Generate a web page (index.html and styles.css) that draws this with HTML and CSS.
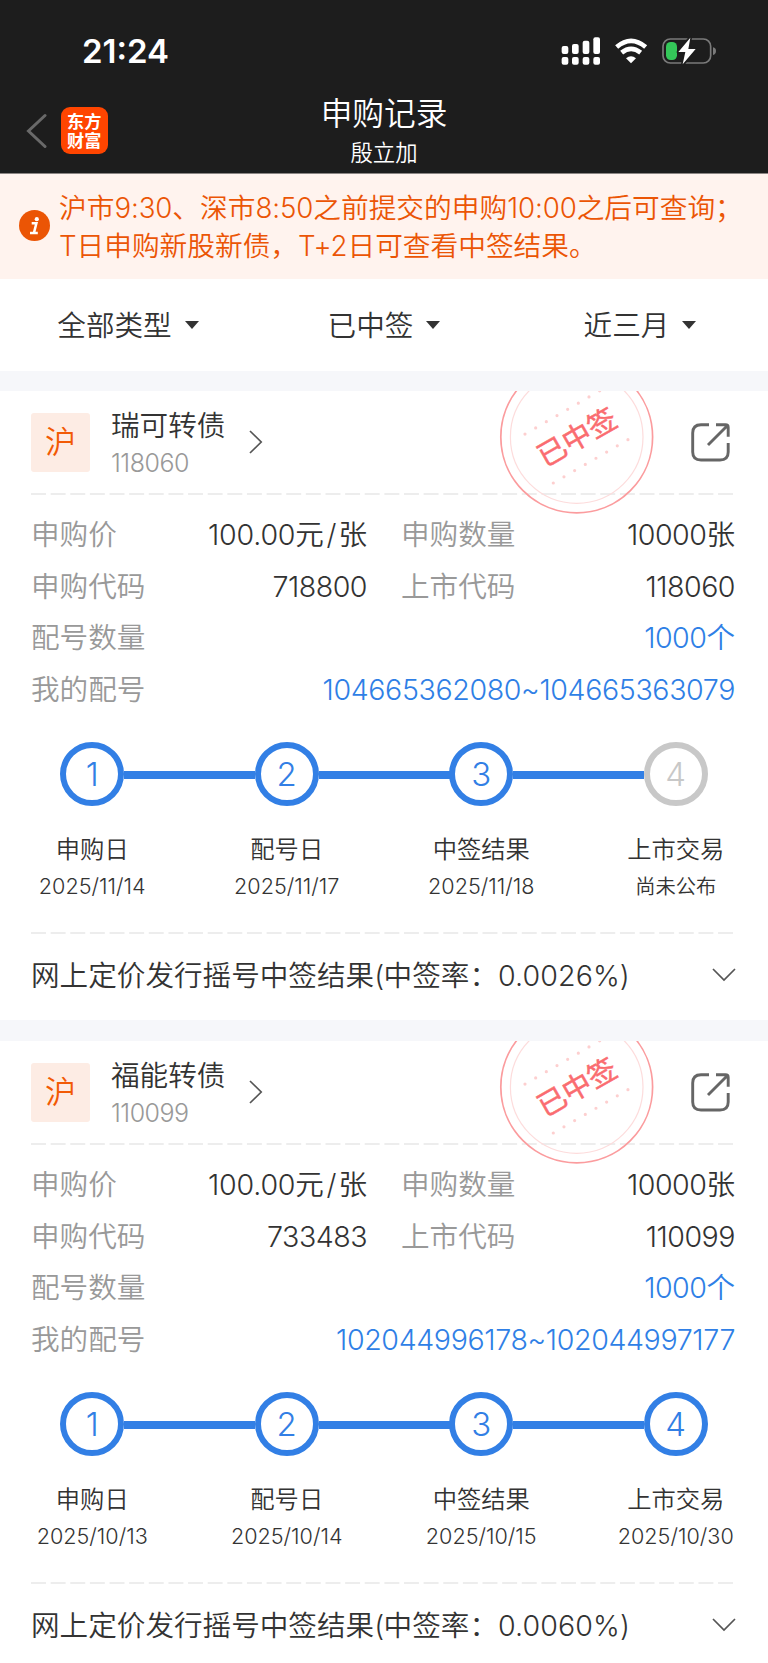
FILE: index.html
```html
<!DOCTYPE html>
<html lang="zh-CN">
<head>
<meta charset="utf-8">
<title>申购记录</title>
<link rel="stylesheet" href="styles.css">
</head>
<body>
<svg class="defs" width="0" height="0">
  <defs>
    <symbol id="stamp" viewBox="0 0 160 126">
      <g fill="none">
        <circle cx="79.7" cy="46" r="75.9" stroke="#fb9c9e" stroke-width="1.7"/>
        <circle cx="79.7" cy="46" r="66.3" stroke="#fddcdc" stroke-width="1.2"/>
        <g stroke="#fdcfcf" stroke-width="3.2" stroke-linecap="round" stroke-dasharray="0 12.33">
          <path d="M28 43.1L104 -1"/>
          <path d="M56.3 92L131.6 48.3"/>
        </g>
      </g>
      <text class="stamp-text" transform="translate(79.8 46) rotate(-29.7)" x="0" y="10.6" text-anchor="middle">已中签</text>
    </symbol>
    <symbol id="share" viewBox="0 0 39 39">
      <g fill="none" stroke="#666" stroke-width="2.9" stroke-linecap="butt" stroke-linejoin="round">
        <path d="M18 1.7H10Q1.7 1.7 1.7 10V29Q1.7 37 10 37H29Q37.2 37 37.2 29V20"/>
        <path d="M25 1.7H34.5Q37.2 1.7 37.2 4.4V13.8M36 3L17 22"/>
      </g>
    </symbol>
    <symbol id="right" viewBox="0 0 14 24"><path d="M1 1L12.2 12L1 23" fill="none" stroke="#555" stroke-width="1.7"/></symbol>
    <symbol id="down" viewBox="0 0 24 14"><path d="M1 1L12 12L23 1" fill="none" stroke="#555" stroke-width="1.7"/></symbol>
    <symbol id="dash" viewBox="0 0 702 2"><path d="M0 1H702" stroke="#e8e8e8" stroke-width="1.7" stroke-dasharray="15 4.63"/></symbol>
  </defs>
</svg>

<header class="top">
  <div class="status">
    <span class="time">21:24</span>
    <svg class="status-icons" viewBox="525 108 480 90">
      <g fill="#fff">
        <rect x="533" y="138" width="20" height="24" rx="6"/><rect x="564" y="132" width="20" height="30" rx="6"/>
        <rect x="596" y="122" width="20" height="40" rx="6"/><rect x="628" y="112" width="20" height="50" rx="6"/>
        <rect x="533" y="171" width="20" height="23" rx="6"/><rect x="564" y="171" width="20" height="23" rx="6"/>
        <rect x="596" y="171" width="20" height="23" rx="6"/><rect x="628" y="171" width="20" height="23" rx="6"/>
        <path d="M726 175Q741 162 756 175L741 190Z"/>
      </g>
      <g fill="none" stroke="#fff" stroke-width="14">
        <path d="M698 141Q741 104 785 141"/><path d="M713 158Q741 135 770 158"/>
      </g>
      <rect x="837" y="117" width="143" height="72" rx="22" fill="none" stroke="#7a7a7a" stroke-width="5"/>
      <path d="M987 142Q996 144 996 153T987 165Z" fill="#7a7a7a"/>
      <rect x="846" y="126" width="33" height="54" rx="14" fill="#34c759"/>
      <path d="M919 113L883 156H904L896 193L935 147H913Z" fill="#fff" stroke="#1d1d1d" stroke-width="10" paint-order="stroke" stroke-linejoin="round"/>
    </svg>
  </div>
  <div class="nav">
    <div class="nav-left">
      <svg class="back" viewBox="0 0 21 36"><path d="M19 2.5L2.5 18L19 33.5" fill="none" stroke="#696969" stroke-width="3" stroke-linecap="round"/></svg>
      <div class="logo">东方财富</div>
    </div>
    <div class="nav-title"><h1>申购记录</h1><p>殷立加</p></div>
  </div>
</header>

<section class="notice">
  <svg class="info" viewBox="0 0 31 31"><circle cx="15.5" cy="15.5" r="15.5" fill="#eb5505"/><g fill="none" stroke="#fff" stroke-width="2.5"><path d="M12.7 13.3H17.4L15 22.6M11 22.9H18.8"/></g><circle cx="17.8" cy="9.2" r="2.1" fill="#fff"/></svg>
  <p>沪市<b>9:30</b>、深市<b>8:50</b>之前提交的申购<b>10:00</b>之后可查询；<br><b>T</b>日申购新股新债，<b>T+2</b>日可查看中签结果。</p>
</section>

<nav class="filters">
  <div class="filter"><span>全部类型</span><i></i></div>
  <div class="filter"><span>已中签</span><i></i></div>
  <div class="filter"><span>近三月</span><i></i></div>
</nav>

<main>
  <article class="card">
    <svg class="stamp"><use href="#stamp"/></svg>
    <div class="card-head">
      <span class="market">沪</span>
      <div class="bond"><h2>瑞可转债</h2><p>118060</p></div>
      <svg class="go"><use href="#right"/></svg>
      <svg class="share"><use href="#share"/></svg>
    </div>
    <svg class="dash"><use href="#dash"/></svg>
    <dl class="facts">
      <dt>申购价</dt><dd><b class="price">100.00</b>元<b class="per">/</b>张</dd><dt class="second">申购数量</dt><dd><b>10000</b>张</dd>
      <dt>申购代码</dt><dd><b>718800</b></dd><dt class="second">上市代码</dt><dd><b>118060</b></dd>
      <dt>配号数量</dt><dd class="wide"><b>1000</b>个</dd>
      <dt>我的配号</dt><dd class="wide"><b class="range">104665362080~104665363079</b></dd>
    </dl>
    <ol class="steps">
      <li><span class="dot">1</span><strong>申购日</strong><em>2025/11/14</em></li>
      <li><span class="dot">2</span><strong>配号日</strong><em>2025/11/17</em></li>
      <li><span class="dot">3</span><strong>中签结果</strong><em>2025/11/18</em></li>
      <li class="todo"><span class="dot">4</span><strong>上市交易</strong><em class="cn">尚未公布</em></li>
    </ol>
    <svg class="dash"><use href="#dash"/></svg>
    <div class="result"><span>网上定价发行摇号中签结果<b>(</b>中签率：<b class="rate">0.0026%)</b></span><svg class="more"><use href="#down"/></svg></div>
  </article>

  <article class="card">
    <svg class="stamp"><use href="#stamp"/></svg>
    <div class="card-head">
      <span class="market">沪</span>
      <div class="bond"><h2>福能转债</h2><p>110099</p></div>
      <svg class="go"><use href="#right"/></svg>
      <svg class="share"><use href="#share"/></svg>
    </div>
    <svg class="dash"><use href="#dash"/></svg>
    <dl class="facts">
      <dt>申购价</dt><dd><b class="price">100.00</b>元<b class="per">/</b>张</dd><dt class="second">申购数量</dt><dd><b>10000</b>张</dd>
      <dt>申购代码</dt><dd><b>733483</b></dd><dt class="second">上市代码</dt><dd><b>110099</b></dd>
      <dt>配号数量</dt><dd class="wide"><b>1000</b>个</dd>
      <dt>我的配号</dt><dd class="wide"><b class="range">102044996178~102044997177</b></dd>
    </dl>
    <ol class="steps">
      <li><span class="dot">1</span><strong>申购日</strong><em>2025/10/13</em></li>
      <li><span class="dot">2</span><strong>配号日</strong><em>2025/10/14</em></li>
      <li><span class="dot">3</span><strong>中签结果</strong><em>2025/10/15</em></li>
      <li><span class="dot">4</span><strong>上市交易</strong><em>2025/10/30</em></li>
    </ol>
    <svg class="dash"><use href="#dash"/></svg>
    <div class="result"><span>网上定价发行摇号中签结果<b>(</b>中签率：<b class="rate">0.0060%)</b></span><svg class="more"><use href="#down"/></svg></div>
  </article>
</main>
</body>
</html>
```
FILE: styles.css
```css
* { box-sizing: border-box; margin: 0; padding: 0; }
html { height: 1663px; overflow: hidden; }
body {
  width: 768px; height: 1663px; overflow: hidden;
  background: #f6f7fa; color: #333;
  font-family: "Noto Sans CJK SC", sans-serif; font-weight: 350; font-size: 28.6px;
}
svg { display: block; flex: none; }
.defs { position: absolute; }
b { font-family: Inter, sans-serif; font-weight: 300; letter-spacing: -0.5px; line-height: 0; }
h1, h2 { font-weight: inherit; }
em { font-style: normal; }
li { list-style: none; }

.top { height: 174px; background: #1d1d1d; border-bottom: 1px solid #8b8583; color: #fff; }
.status { height: 86px; padding: 16px 49px 0 82px; display: flex; justify-content: space-between; align-items: center; }
.time { font: 600 33px/40px Inter, sans-serif; letter-spacing: 0; }
.status-icons { width: 160px; height: 30px; }
.nav { height: 87px; display: grid; grid-template-columns: 1fr 300px 1fr; }
.nav-left { display: flex; align-items: center; gap: 14px; padding: 2px 0 0 26px; }
.back { width: 21px; height: 36px; }
.logo {
  width: 47px; height: 47px; border-radius: 9px; background: #ff4500;
  padding: 4px 6px 0; font-weight: 700; font-size: 17.2px; line-height: 19.3px;
}
.nav-title { text-align: center; padding-top: 4px; }
.nav-title h1 { font-size: 31.7px; line-height: 42px; }
.nav-title p { font-size: 22.4px; line-height: 38px; }

.notice { height: 105px; background: #fff3ee; color: #eb5505; display: flex; padding: 14px 0 0 18.5px; gap: 9.5px; font-size: 27.7px; line-height: 37.7px; white-space: nowrap; }
.notice b { letter-spacing: -0.1px; }
.info { width: 31px; height: 31px; margin-top: 22px; }

.filters { height: 92px; background: #fff; display: grid; grid-template-columns: repeat(3, 256px); }
.filter { display: flex; align-items: center; justify-content: center; gap: 13px; }
.filter span { padding-bottom: 3px; }
.filter i { border: 7px solid transparent; border-top: 8px solid #333; border-bottom: 0; }

main { padding-top: 20px; display: grid; gap: 21px; }
.card { position: relative; height: 629px; background: #fff; padding: 0 33px 0 31px; overflow: hidden; }
.stamp { position: absolute; left: 497px; top: 0; width: 160px; height: 126px; z-index: 1; }
.stamp-text { font: 400 28.7px "Noto Sans CJK SC", sans-serif; fill: #fa6c70; stroke: #fa6c70; stroke-width: 0.5px; }
.card-head { height: 102px; display: flex; align-items: center; }
.market { width: 59px; height: 59px; border-radius: 3px; background: #fdece4; color: #f25a05; display: grid; place-items: center; font-size: 31px; line-height: 44px; padding-bottom: 4px; }
.bond { margin-left: 21px; width: 115px; white-space: nowrap; padding-top: 2px; }
.bond h2 { font-size: 28.6px; line-height: 38px; }
.bond p { font: 300 25px/37px Inter, sans-serif; letter-spacing: -0.5px; color: #999; padding-top: 2px; }
.go { width: 14px; height: 24px; margin-left: 23px; }
.share { width: 39px; height: 39px; margin-left: auto; margin-right: 5px; }
.dash { width: 702px; height: 2px; }
.facts { display: grid; grid-template-columns: 120px 216px 154px 214px; grid-auto-rows: 51.6px; align-items: center; padding-top: 12px; height: 225px; }
.facts dt { color: #999; }
.facts .second { padding-left: 34px; }
.facts dd { text-align: right; white-space: nowrap; }
.facts .wide { grid-column: 2 / 5; color: #2f7fe6; }
.facts .price { letter-spacing: -0.2px; }
.facts .per { padding: 0 2.5px; }
.facts .range { letter-spacing: -0.38px; }
.steps { height: 212px; display: grid; grid-template-columns: repeat(4, 194.5px); margin: 0 -36px; padding-top: 22px; }
.steps li { position: relative; display: flex; flex-direction: column; align-items: center; white-space: nowrap; }
.steps li + li::before { content: ""; position: absolute; right: 129px; top: 29px; width: 131px; height: 8px; background: #327fe5; }
.dot { width: 64px; height: 64px; border: 6px solid #327fe5; border-radius: 50%; color: #327fe5; font: 300 33px/52px Inter, sans-serif; text-align: center; }
.todo .dot { border-color: #c8c8c8; color: #c8c8c8; }
.steps strong { font-weight: 350; font-size: 24.3px; line-height: 36px; margin-top: 24px; }
.steps em { font: 300 21.6px/38px Inter, sans-serif; padding-top: 1px; }
.steps .cn { font: 350 20.3px/38px "Noto Sans CJK SC", sans-serif; padding-top: 0; }
.result { height: 84px; display: flex; align-items: center; justify-content: space-between; white-space: nowrap; margin-right: -1px; }
.result span { padding-bottom: 5px; }
.result .rate { letter-spacing: 0.1px; }
.more { width: 24px; height: 14px; margin-bottom: 2px; }
```
